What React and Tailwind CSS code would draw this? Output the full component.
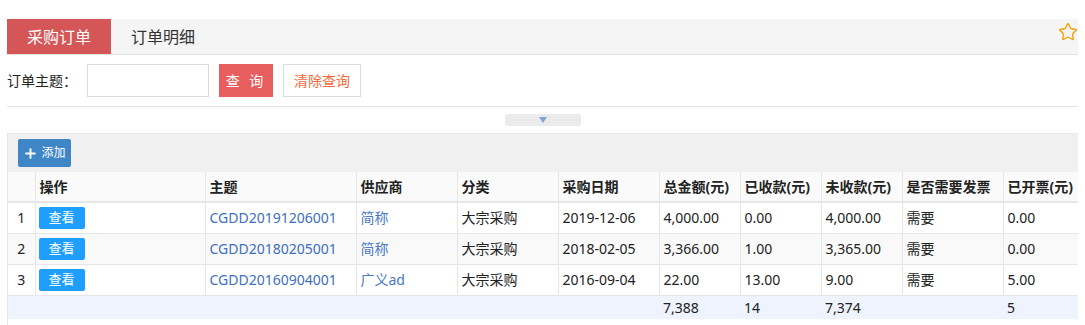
import React from 'react';
import { Star, Plus } from 'lucide-react';

const rows = [
  { no: 1, code: 'CGDD20191206001', supplier: '简称', type: '大宗采购', date: '2019-12-06', total: '4,000.00', paid: '0.00', unpaid: '4,000.00', invoice: '需要', invoiced: '0.00' },
  { no: 2, code: 'CGDD20180205001', supplier: '简称', type: '大宗采购', date: '2018-02-05', total: '3,366.00', paid: '1.00', unpaid: '3,365.00', invoice: '需要', invoiced: '0.00' },
  { no: 3, code: 'CGDD20160904001', supplier: '广义ad', type: '大宗采购', date: '2016-09-04', total: '22.00', paid: '13.00', unpaid: '9.00', invoice: '需要', invoiced: '5.00' },
];

const headers = ['', '操作', '主题', '供应商', '分类', '采购日期', '总金额(元)', '已收款(元)', '未收款(元)', '是否需要发票', '已开票(元)'];
const widths = ['w-[27px]', 'w-[170px]', 'w-[151px]', 'w-[101px]', 'w-[101px]', 'w-[101px]', 'w-[81px]', 'w-[81px]', 'w-[81px]', 'w-[101px]', ''];

const App = () => {
  return (
    <div className="min-h-[325px] bg-white text-[14px] text-[#222] [font-family:'Noto_Sans','Noto_Sans_CJK_SC',sans-serif]">
      <div className="mx-[7px] pt-[19px]">
        {/* Tabs */}
        <div className="flex h-[36px] items-stretch border-b border-[#e2e2e2] bg-[#f5f5f5]">
          <div className="flex items-center bg-[#d55656] px-5 text-[16px] text-white">采购订单</div>
          <div className="flex items-center px-5 text-[16px] text-[#333]">订单明细</div>
          <div className="ml-auto pt-[3px]">
            <Star size={20} strokeWidth={1.6} className="text-[#f5a000]" />
          </div>
        </div>

        {/* Search */}
        <div className="flex h-[52px] items-center border-b border-[#e6e6e6]">
          <span className="w-[80px] text-[14px] text-[#222]">订单主题：</span>
          <input className="h-[33px] w-[122px] border border-[#dcdcdc] px-2 outline-none" />
          <button className="ml-[10px] h-[33px] w-[54px] bg-[#e85d5d] text-[14px] tracking-[3px] text-white">查 询</button>
          <button className="ml-[10px] h-[33px] w-[78px] border border-[#dcdcdc] bg-white text-[14px] text-[#f4683c]">清除查询</button>
        </div>

        {/* Collapse handle */}
        <div className="flex h-[26px] items-center justify-center">
          <div className="flex h-[12px] w-[76px] items-center justify-center rounded-[3px] bg-[#ebebeb]">
            <div className="h-0 w-0 border-x-[4px] border-t-[6px] border-x-transparent border-t-[#7ea3d6]" />
          </div>
        </div>

        {/* Table panel */}
        <div className="border-l border-t border-[#e6e6e6] pb-[7px]">
          <div className="flex h-[38px] items-start bg-[#f0f0f0] pl-[10px] pt-[5px]">
            <button className="flex h-[28px] w-[53px] items-center justify-center gap-[3px] rounded-[2px] bg-[#3f86c7] text-[12px] text-white">
              <Plus size={15} strokeWidth={3} />
              添加
            </button>
          </div>
          <table className="w-full table-fixed border-collapse">
            <colgroup>
              {widths.map((w, i) => (
                <col key={i} className={w} />
              ))}
            </colgroup>
            <thead>
              <tr className="h-[30px] bg-[#fafafa]">
                {headers.map((h, i) => (
                  <th key={i} className="border-b-2 border-r border-[#e6e6e6] px-[4px] text-left font-bold text-[#222] last:border-r-0">
                    {h}
                  </th>
                ))}
              </tr>
            </thead>
            <tbody>
              {rows.map((r, idx) => (
                <tr key={r.no} className={`h-[31px] ${idx === 1 ? 'bg-[#f9f9f9]' : 'bg-white'}`}>
                  <td className="border-b border-r border-[#e6e6e6] text-center">{r.no}</td>
                  <td className="border-b border-r border-[#e6e6e6] px-[3px]">
                    <button className="h-[22px] w-[46px] rounded-[2px] bg-[#1e9fff] text-[13px] text-white">查看</button>
                  </td>
                  <td className="border-b border-r border-[#e6e6e6] px-[4px] text-[#3d6fc2]">{r.code}</td>
                  <td className="border-b border-r border-[#e6e6e6] px-[4px] text-[#4a78c4]">{r.supplier}</td>
                  <td className="border-b border-r border-[#e6e6e6] px-[4px]">{r.type}</td>
                  <td className="border-b border-r border-[#e6e6e6] px-[4px]">{r.date}</td>
                  <td className="border-b border-r border-[#e6e6e6] px-[4px]">{r.total}</td>
                  <td className="border-b border-r border-[#e6e6e6] px-[4px]">{r.paid}</td>
                  <td className="border-b border-r border-[#e6e6e6] px-[4px]">{r.unpaid}</td>
                  <td className="border-b border-r border-[#e6e6e6] px-[4px]">{r.invoice}</td>
                  <td className="border-b border-[#e6e6e6] px-[4px]">{r.invoiced}</td>
                </tr>
              ))}
              <tr className="h-[24px] bg-[#eef3fd]">
                <td colSpan={6} />
                <td className="px-[4px]">7,388</td>
                <td className="px-[4px]">14</td>
                <td className="px-[4px]">7,374</td>
                <td />
                <td className="px-[4px]">5</td>
              </tr>
            </tbody>
          </table>
        </div>
      </div>
    </div>
  );
};

export default App;
